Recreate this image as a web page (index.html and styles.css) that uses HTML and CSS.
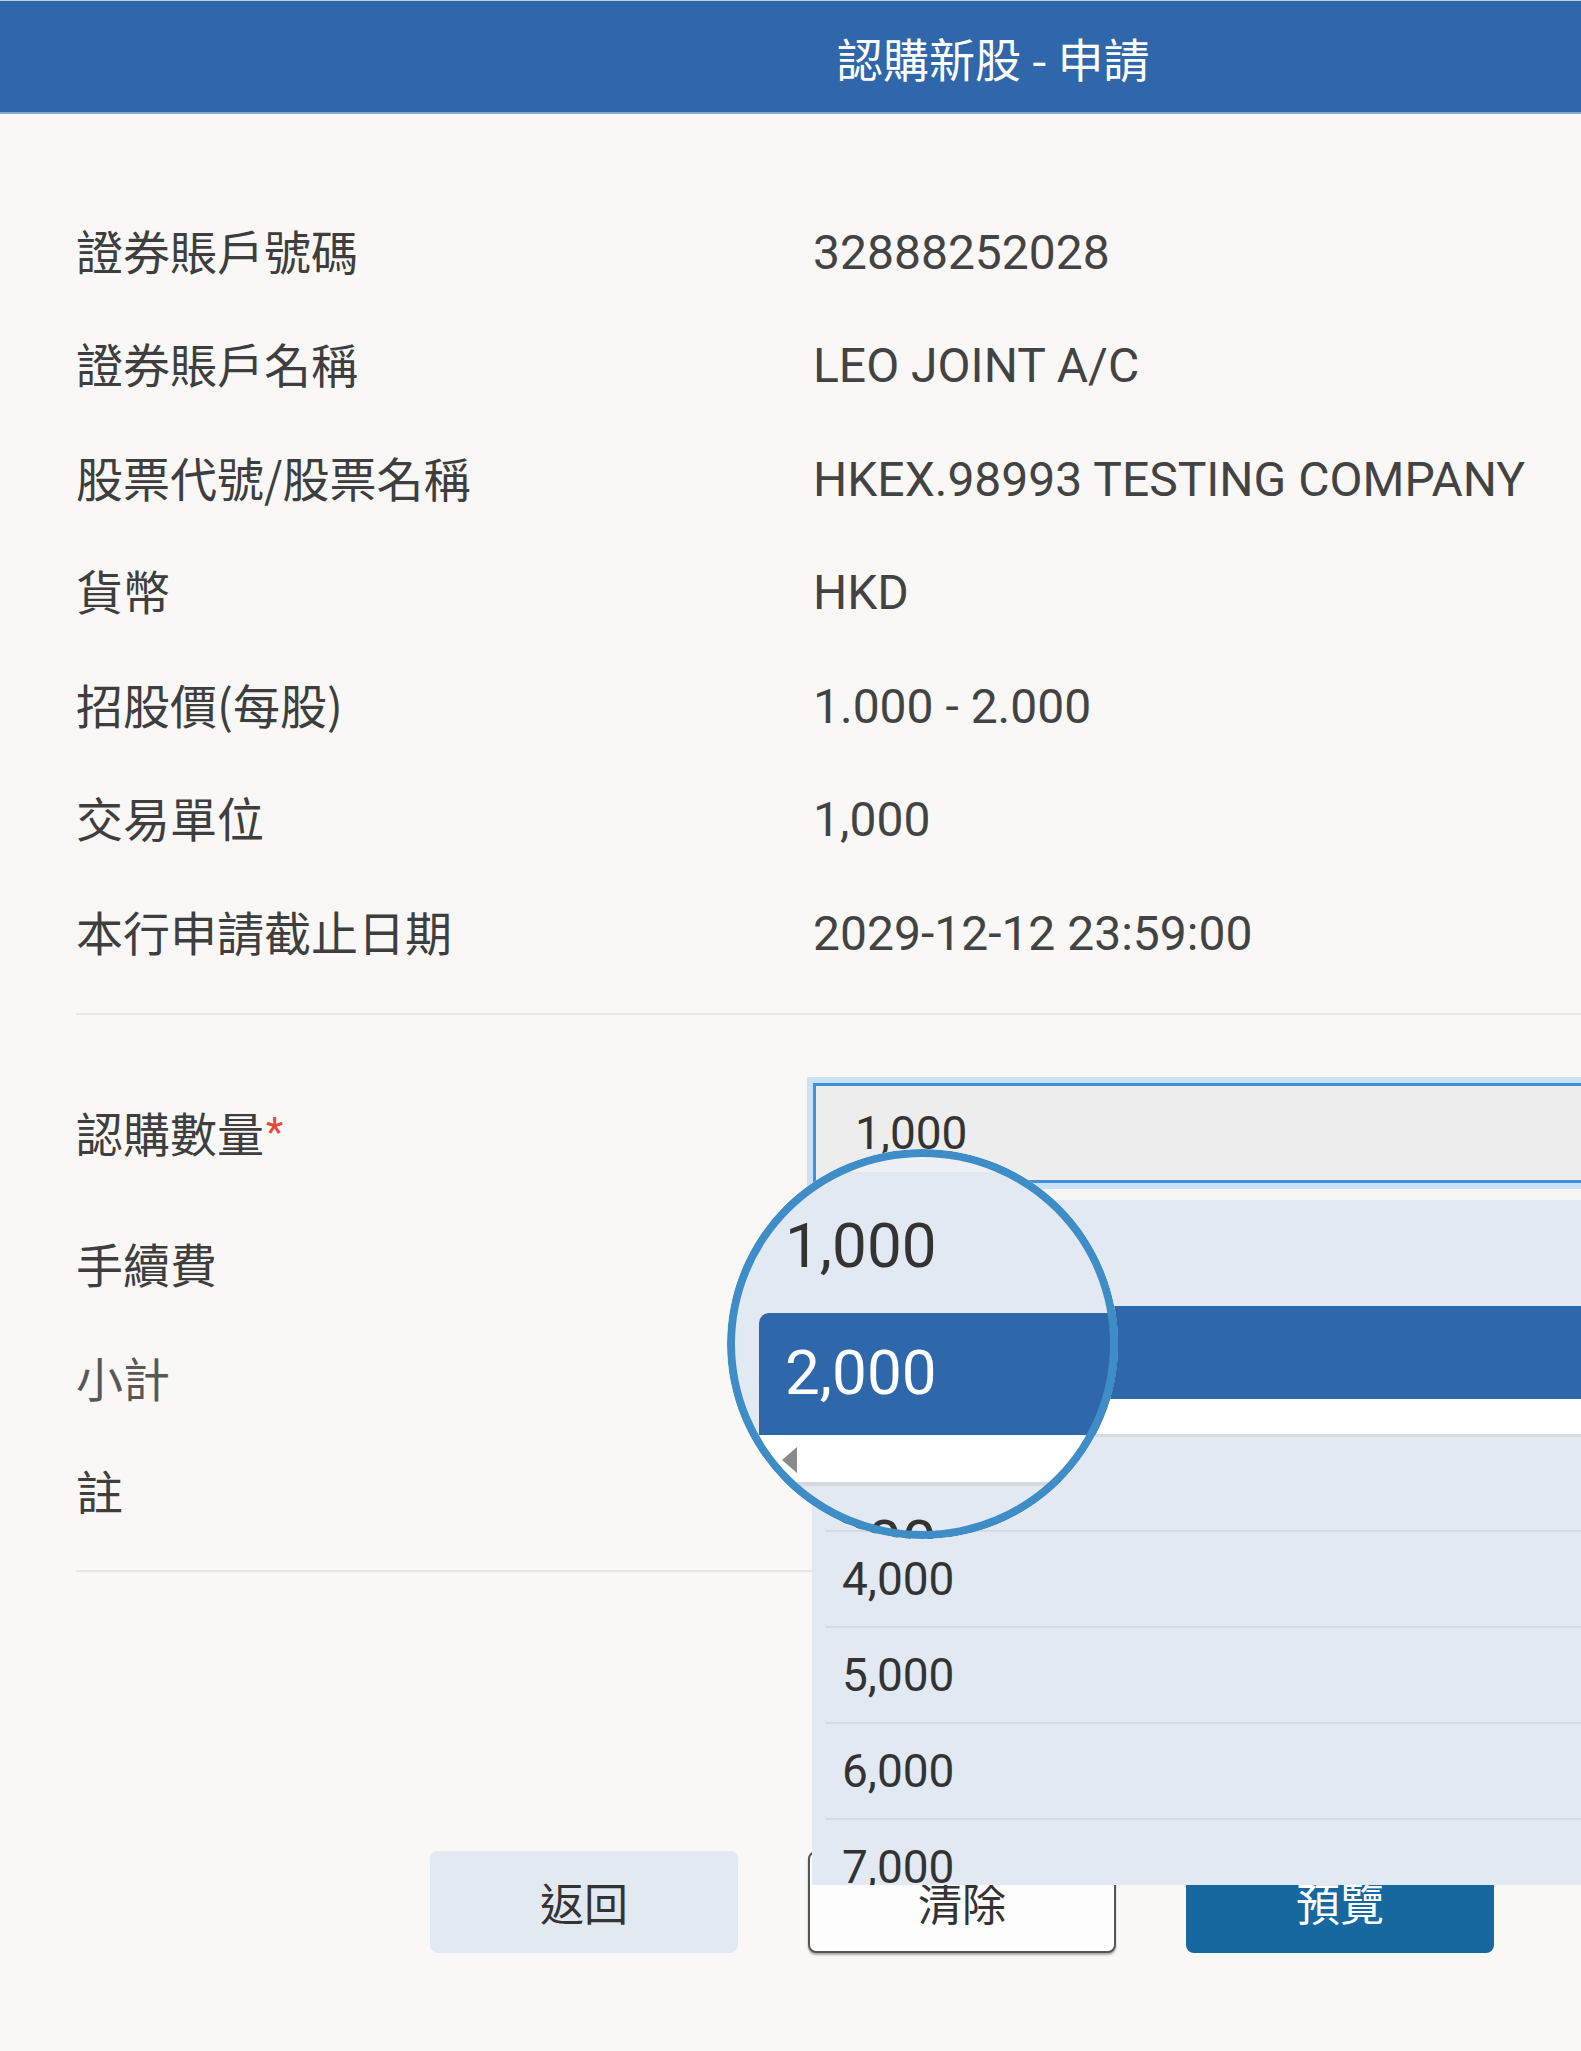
FILE: index.html
```html
<!DOCTYPE html>
<html lang="zh-Hant">
<head>
<meta charset="utf-8">
<title>認購新股 - 申請</title>
<link rel="stylesheet" href="styles.css">
</head>
<body>
<header class="topbar"><h1 class="title">認購新股 - 申請</h1></header>
<main class="content">
  <section class="info">
    <div class="row"><div class="label">證券賬戶號碼</div><div class="value">32888252028</div></div>
    <div class="row"><div class="label">證券賬戶名稱</div><div class="value">LEO JOINT A/C</div></div>
    <div class="row"><div class="label">股票代號/股票名稱</div><div class="value">HKEX.98993 TESTING COMPANY</div></div>
    <div class="row"><div class="label">貨幣</div><div class="value">HKD</div></div>
    <div class="row"><div class="label">招股價(每股)</div><div class="value">1.000 - 2.000</div></div>
    <div class="row"><div class="label">交易單位</div><div class="value">1,000</div></div>
    <div class="row"><div class="label">本行申請截止日期</div><div class="value">2029-12-12 23:59:00</div></div>
  </section>
  <hr class="divider">
  <section class="form">
    <div class="row row-input">
      <div class="label">認購數量<span class="req">*</span></div>
      <div class="field"><div class="input">1,000</div></div>
    </div>
    <div class="row"><div class="label">手續費</div></div>
    <div class="row"><div class="label label-light">小計</div></div>
    <div class="row"><div class="label">註</div></div>
  </section>
  <hr class="divider divider-2">
  <div class="actions">
    <button class="btn btn-back">返回</button>
    <button class="btn btn-clear">清除</button>
    <button class="btn btn-preview">預覽</button>
  </div>

  <div class="dropdown">
    <div class="opt opt-first">1,000</div>
    <div class="opt opt-selected">2,000</div>
    <div class="hscroll"></div>
    <div class="opt opt-third">3,000</div>
    <div class="opt">4,000</div>
    <div class="opt">5,000</div>
    <div class="opt">6,000</div>
    <div class="opt">7,000</div>
  </div>

  <div class="lens">
    <div class="lens-top"></div>
    <div class="lens-text lens-t1">1,000</div>
    <div class="lens-band"></div>
    <div class="lens-text lens-t2">2,000</div>
    <div class="lens-scroll"></div>
    <div class="lens-arrow"></div>
    <div class="lens-line"></div>
    <div class="lens-text lens-t3">3,000</div>
  </div>
</main>
</body>
</html>
```

FILE: styles.css
```css
html, body {
  margin: 0;
  padding: 0;
  overflow: hidden;
}
body {
  background: #f9f8f7;
  font-family: Roboto, "Noto Sans CJK TC", "Noto Sans CJK SC", sans-serif;
  color: #404040;
  width: 1581px;
  height: 2051px;
  position: relative;
}
.topbar {
  box-sizing: border-box;
  height: 114px;
  background: #2f67aa;
  border-top: 1px solid #c3ccd6;
  border-bottom: 2px solid #86a9d3;
  display: flex;
  align-items: center;
  padding-left: 837px;
}
.title {
  margin: 0;
  font-family: "Noto Sans CJK TC", sans-serif;
  font-size: 46px;
  font-weight: 400;
  color: #ffffff;
  line-height: 1;
  white-space: nowrap;
}
.content {
  padding: 82px 0 0 76px;
}
.row {
  display: grid;
  grid-template-columns: 737px 1fr;
  align-items: center;
  height: 113.5px;
}
.label {
  font-family: "Noto Sans CJK TC", sans-serif;
  font-size: 47px;
  line-height: 1.2;
  color: #3e3e3e;
  white-space: nowrap;
  margin-top: -6px;
}
.label-light {
  color: #575757;
}
.value {
  font-size: 48px;
  line-height: 1.2;
  color: #434343;
  white-space: nowrap;
}
.req {
  font-family: Roboto, sans-serif;
  color: #e8463b;
  font-size: 40px;
  vertical-align: 6px;
  margin-left: 2px;
}
.divider {
  border: 0;
  height: 2px;
  background: #e6e6e6;
  margin: 22px 0 0 0;
}
.divider-2 {
  margin-top: 20px;
}
.form .row-input {
  height: 100px;
  margin-top: 68px;
  margin-bottom: 27px;
}
.form .row-input .label {
  margin-top: 0;
}
.field {
  height: 100px;
}
.input {
  box-sizing: border-box;
  height: 100px;
  width: 800px;
  border: 3px solid #3f91dc;
  box-shadow: 0 0 0 6px #cbe2f6;
  background: #ededed;
  display: flex;
  align-items: center;
  padding-left: 39px;
  font-size: 46px;
  color: #333;
}
.actions {
  display: flex;
  gap: 70px;
  margin: 279px 0 0 354px;
}
.btn {
  box-sizing: border-box;
  width: 308px;
  height: 102px;
  border-radius: 8px;
  border: 0;
  font-family: "Noto Sans CJK TC", sans-serif;
  font-size: 44px;
  color: #333;
  padding: 0;
}
.btn-back {
  background: #e3e9f1;
}
.btn-clear {
  background: #fdfdfd;
  border: 2px solid #555;
  box-shadow: 0 2px 2px rgba(0, 0, 0, 0.3);
}
.btn-preview {
  background: #17689f;
  color: #fff;
}

/* dropdown overlay */
.dropdown {
  position: absolute;
  left: 812px;
  top: 1200px;
  width: 800px;
  height: 685px;
  background: #e2e9f2;
  overflow: hidden;
  z-index: 5;
  font-size: 46px;
  color: #333;
  box-shadow: 0 -10px 0 #f6f6f6;
}
.opt {
  box-sizing: border-box;
  height: 96px;
  margin-left: 13px;
  padding-left: 17px;
  border-bottom: 2px solid #d3dbe2;
  display: flex;
  align-items: center;
}
.opt-first {
  height: 106px;
  border-bottom: 0;
}
.opt-selected {
  height: 93px;
  margin-left: 0;
  padding-left: 30px;
  border-bottom: 0;
  background: #2e67aa;
  color: #fff;
}
.opt-third {
  height: 95px;
}
.hscroll {
  height: 35px;
  background: #fff;
  border-bottom: 3px solid #d8dadd;
}

/* magnifier */
.lens {
  position: absolute;
  left: 727px;
  top: 1149px;
  width: 391px;
  height: 390px;
  border-radius: 50%;
  overflow: hidden;
  background: #e2e9f2;
  z-index: 10;
}
.lens::after {
  content: "";
  position: absolute;
  inset: 0;
  border-radius: 50%;
  border: 8px solid #3e8dc7;
}
.lens-top {
  position: absolute;
  left: 0;
  top: 0;
  width: 100%;
  height: 23px;
  background: #edf0f4;
}
.lens-text {
  position: absolute;
  left: 58px;
  font-size: 62px;
  line-height: 1;
  color: #333;
}
.lens-t1 { top: 66px; }
.lens-t2 { top: 193px; color: #fff; }
.lens-t3 { top: 363px; }
.lens-band {
  position: absolute;
  left: 32px;
  top: 164px;
  width: 400px;
  height: 122px;
  background: #2e67aa;
  border-top-left-radius: 10px;
}
.lens-scroll {
  position: absolute;
  left: 0;
  top: 286px;
  width: 100%;
  height: 47px;
  background: #fff;
}
.lens-arrow {
  position: absolute;
  left: 55px;
  top: 298px;
  width: 0;
  height: 0;
  border-top: 13px solid transparent;
  border-bottom: 13px solid transparent;
  border-right: 15px solid #8a8a8a;
}
.lens-line {
  position: absolute;
  left: 0;
  top: 333px;
  width: 100%;
  height: 4px;
  background: #d6d9dc;
}
```
